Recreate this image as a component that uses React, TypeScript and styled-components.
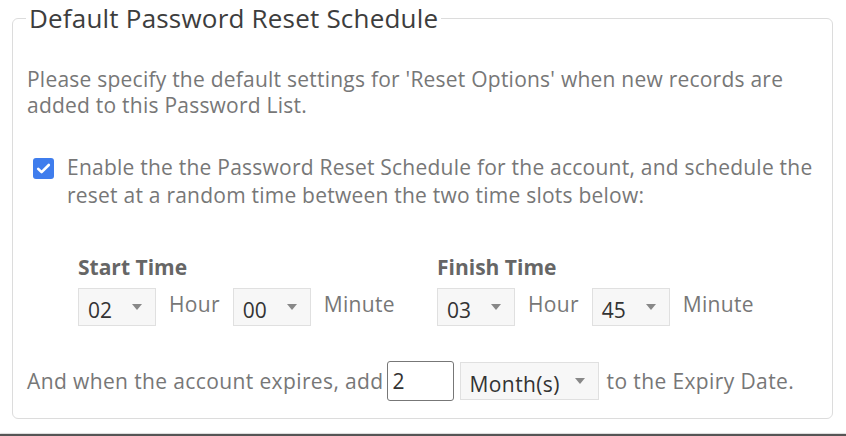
import styled, { createGlobalStyle } from 'styled-components';

const GlobalStyle = createGlobalStyle`
  html, body {
    margin: 0;
    padding: 0;
    background: #fff;
  }
  body {
    font-family: 'Open Sans', 'Noto Sans', sans-serif;
    color: #777;
  }
`;

const TimeSelect = ({ value, width = 78 }: { value: string; width?: number }) => (
  <SelectBox $width={width}>
    <span className="value">{value}</span>
    <Caret />
  </SelectBox>
);

const TimeGroup = ({ title, hour, minute }: { title: string; hour: string; minute: string }) => (
  <TimeColumn>
    <TimeTitle>{title}</TimeTitle>
    <TimeRow>
      <TimeSelect value={hour} />
      <UnitLabel>Hour</UnitLabel>
      <TimeSelect value={minute} />
      <UnitLabel>Minute</UnitLabel>
    </TimeRow>
  </TimeColumn>
);

const App = () => (
  <>
    <GlobalStyle />
    <Page>
      <Panel>
        <Legend>Default Password Reset Schedule</Legend>
        <Intro>
          Please specify the default settings for 'Reset Options' when new records are added to this Password
          List.
        </Intro>
        <CheckRow>
          <CheckBox>
            <svg viewBox="0 0 21 21" width="21" height="21">
              <rect x="0" y="0" width="21" height="21" rx="3" fill="#3f7ded" />
              <path d="M5.2 10.8l3.4 3.4L15.8 7" stroke="#fff" strokeWidth="2.6" fill="none" strokeLinecap="round" strokeLinejoin="round" />
            </svg>
          </CheckBox>
          <span>
            Enable the the Password Reset Schedule for the account, and schedule the reset at a random time between
            the two time slots below:
          </span>
        </CheckRow>
        <TimeGrid>
          <TimeGroup title="Start Time" hour="02" minute="00" />
          <TimeGroup title="Finish Time" hour="03" minute="45" />
        </TimeGrid>
        <ExpiryRow>
          <span>And when the account expires, add</span>
          <NumberInput defaultValue="2" />
          <TimeSelect value="Month(s)" width={139} />
          <span className="tail">to the Expiry Date.</span>
        </ExpiryRow>
      </Panel>
      <Divider />
    </Page>
  </>
);

export default App;

const Page = styled.div`
  box-sizing: border-box;
  width: 846px;
  padding: 3px 13px 0 12px;
`;

const Panel = styled.fieldset`
  margin: 0;
  border: 1px solid #dcdcdc;
  border-radius: 6px;
  padding: 33px 14px 17px 14px;
  min-width: 0;
`;

const Legend = styled.legend`
  margin-left: -1px;
  padding: 0 3px 0 3px;
  font-size: 26px;
  line-height: 30px;
  letter-spacing: 0.2px;
  color: #3d3d3d;
`;

const Intro = styled.p`
  margin: 0;
  font-size: 21px;
  line-height: 26px;
  letter-spacing: 0.23px;
  color: #777;
`;

const CheckRow = styled.label`
  display: flex;
  align-items: flex-start;
  gap: 13px;
  margin-top: 35px;
  padding-left: 6px;
  font-size: 21px;
  line-height: 28px;
  letter-spacing: 0.23px;
  color: #777;
`;

const CheckBox = styled.span`
  display: inline-flex;
  flex: none;
  margin-top: 5px;
`;

const TimeGrid = styled.div`
  display: grid;
  grid-template-columns: 359px auto;
  margin-top: 46px;
  padding-left: 51px;
`;

const TimeColumn = styled.div`
  display: flex;
  flex-direction: column;
  gap: 9px;
`;

const TimeTitle = styled.div`
  font-size: 21px;
  font-weight: 700;
  line-height: 24px;
  color: #666;
`;

const TimeRow = styled.div`
  display: flex;
  align-items: flex-start;
  gap: 13px;
`;

const UnitLabel = styled.span`
  padding-top: 1px;
  font-size: 21px;
  line-height: 30px;
  letter-spacing: 0.3px;
  color: #777;
`;

const SelectBox = styled.div<{ $width: number }>`
  position: relative;
  flex: none;
  box-sizing: border-box;
  width: ${({ $width }) => $width}px;
  height: 38px;
  border: 1px solid #e0e0e0;
  background: #f7f7f7;
  padding: 6px 0 0 9px;
  font-size: 21px;
  line-height: 30px;
  color: #333;
`;

const Caret = styled.span`
  position: absolute;
  right: 13px;
  top: 15px;
  width: 0;
  height: 0;
  border-left: 5px solid transparent;
  border-right: 5px solid transparent;
  border-top: 6px solid #888;
`;

const ExpiryRow = styled.div`
  display: flex;
  align-items: center;
  margin-top: 35px;
  font-size: 21px;
  letter-spacing: 0.38px;
  color: #777;

  .tail {
    margin-left: 8px;
  }
`;

const NumberInput = styled.input`
  box-sizing: border-box;
  width: 67px;
  height: 40px;
  margin: 0 6px 0 3px;
  padding: 0 5px;
  border: 1px solid #777;
  border-radius: 3px;
  font-family: inherit;
  font-size: 21px;
  color: #333;
  background: #fff;
`;

const Divider = styled.div`
  margin: 15px -13px 0 -12px;
  height: 3px;
  background: #555;
  box-shadow: 0 -1px 1px rgba(0, 0, 0, 0.15);
`;
